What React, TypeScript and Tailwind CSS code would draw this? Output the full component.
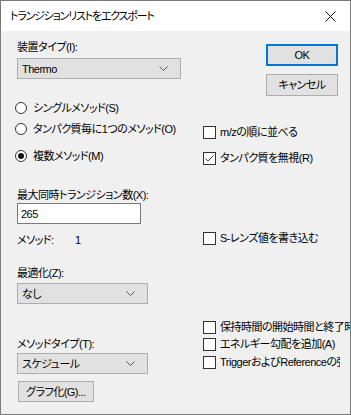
import React from "react";

const font =
  "font-['Liberation_Sans','Noto_Sans_CJK_JP',sans-serif] [font-feature-settings:'palt'] text-[11px] leading-[16px] tracking-[-0.5px] text-black";

function Chevron() {
  return (
    <svg width="9" height="5" viewBox="0 0 9 5" className="shrink-0">
      <path d="M0.5 0.5 L4.5 4.5 L8.5 0.5" fill="none" stroke="#555" strokeWidth="1" />
    </svg>
  );
}

function Combo({ value, width }: { value: string; width: string }) {
  return (
    <div
      className={`flex items-center justify-between h-[21px] ${width} bg-[#e1e1e1] border border-[#adadad] pl-[4px] pr-[12px]`}
    >
      <span>{value}</span>
      <Chevron />
    </div>
  );
}

function Radio({ label, checked }: { label: string; checked?: boolean }) {
  return (
    <div className="flex items-center h-[16px] pl-[14px]">
      <span className="flex items-center justify-center shrink-0 w-[12px] h-[12px] rounded-full border border-[#333] bg-white">
        {checked && <span className="w-[6px] h-[6px] rounded-full bg-[#111]" />}
      </span>
      <span className="ml-[6px] whitespace-nowrap">{label}</span>
    </div>
  );
}

function Check({ label, checked, clip }: { label: string; checked?: boolean; clip?: string }) {
  return (
    <div className={`flex items-center h-[16px] whitespace-nowrap overflow-hidden ${clip ?? ""}`}>
      <span className="flex items-center justify-center shrink-0 w-[13px] h-[13px] border border-[#333] bg-white">
        {checked && (
          <svg width="11" height="11" viewBox="0 0 11 11">
            <path d="M1.5 5.5 L4 8 L9.5 2.5" fill="none" stroke="#444" strokeWidth="1" />
          </svg>
        )}
      </span>
      <span className="ml-[4px]">{label}</span>
    </div>
  );
}

export default function App() {
  return (
    <div className={`w-[351px] h-[415px] border border-[#7a7a7a] bg-[#f0f0f0] overflow-hidden ${font}`}>
      <div className="flex items-center justify-between h-[30px] bg-white pl-[9px] pr-[14px]">
        <span className="tracking-[-1.2px]">トランジションリストをエクスポート</span>
        <svg width="11" height="11" viewBox="0 0 11 11">
          <path d="M0.5 0.5 L10.5 10.5 M10.5 0.5 L0.5 10.5" stroke="#111" strokeWidth="1" />
        </svg>
      </div>

      <div className="grid grid-cols-[188px_minmax(0,1fr)]">
        <div className="flex flex-col">
          <div className="pl-[16px] pt-[8px]">
            <div>装置タイプ(I):</div>
            <div className="mt-[3px]">
              <Combo value="Thermo" width="w-[164px]" />
            </div>
          </div>

          <div className="mt-[21px]">
            <Radio label="シングルメソッド(S)" />
          </div>
          <div className="mt-[5px]">
            <Radio label="タンパク質毎に1つのメソッド(O)" />
          </div>
          <div className="mt-[11px]">
            <Radio label="複数メソッド(M)" checked />
          </div>

          <div className="pl-[16px] mt-[23px]">
            <div>最大同時トランジション数(X):</div>
            <div className="h-[21px] w-[124px] bg-white border border-[#7a7a7a] pl-[3px] flex items-center">265</div>
            <div className="flex mt-[8px]">
              <span className="w-[58px]">メソッド:</span>
              <span>1</span>
            </div>

            <div className="mt-[17px]">最適化(Z):</div>
            <div className="mt-[2px]">
              <Combo value="なし" width="w-[131px]" />
            </div>

            <div className="mt-[32px]">メソッドタイプ(T):</div>
            <div className="mt-[1px]">
              <Combo value="スケジュール" width="w-[131px]" />
            </div>
            <button className="mt-[7px] ml-[1px] h-[21px] px-[7px] bg-[#e1e1e1] border border-[#adadad]">
              グラフ化(G)...
            </button>
          </div>
        </div>

        <div className="flex flex-col pl-[14px] min-w-0">
          <div className="flex flex-col items-end pr-[12px] pt-[13px] gap-[8px]">
            <button className="w-[72px] h-[22px] bg-[#e1e1e1] border-2 border-[#0078d7]">OK</button>
            <button className="w-[72px] h-[22px] bg-[#e1e1e1] border border-[#adadad]">キャンセル</button>
          </div>
          <div className="mt-[28px]">
            <Check label="m/zの順に並べる" />
          </div>
          <div className="mt-[10px]">
            <Check label="タンパク質を無視(R)" checked />
          </div>
          <div className="mt-[64px]">
            <Check label="S-レンズ値を書き込む" />
          </div>
          <div className="mt-[73px]">
            <Check label="保持時間の開始時間と終了時間を使用" />
          </div>
          <div className="mt-[1px]">
            <Check label="エネルギー勾配を追加(A)" />
          </div>
          <div className="mt-[2px]">
            <Check label="TriggerおよびReferenceの強度を書き込む" clip="w-[137px]" />
          </div>
        </div>
      </div>
    </div>
  );
}
